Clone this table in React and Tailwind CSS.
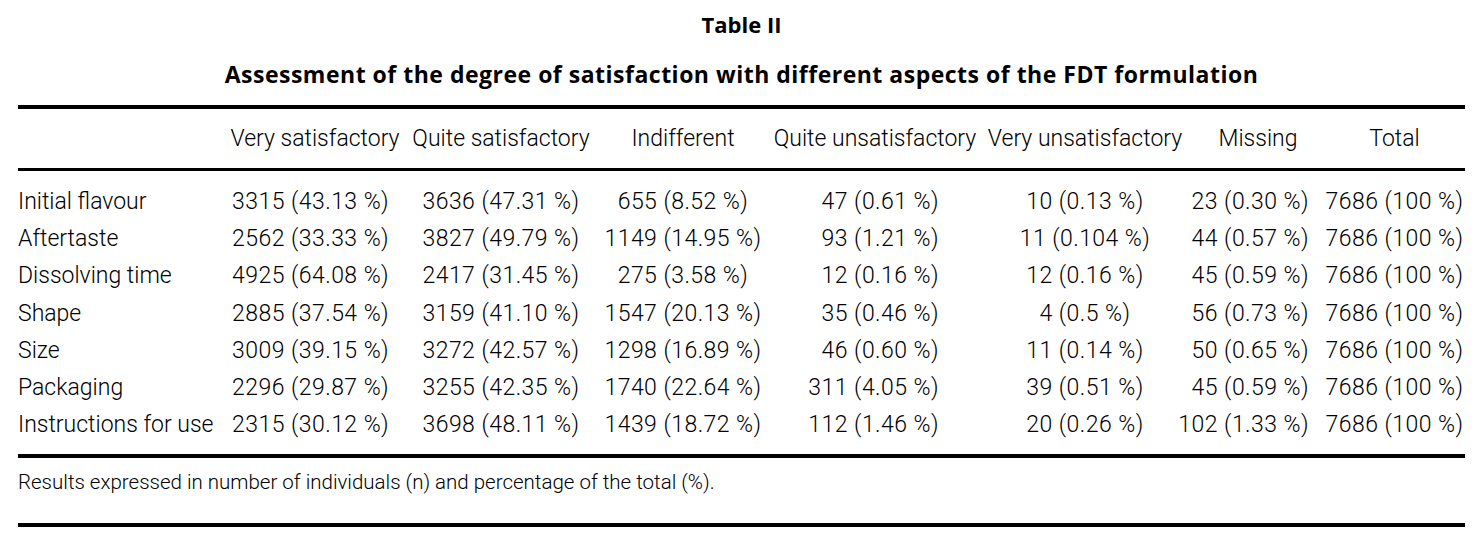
import React from "react";

const headers = [
  "Very satisfactory",
  "Quite satisfactory",
  "Indifferent",
  "Quite unsatisfactory",
  "Very unsatisfactory",
  "Missing",
  "Total",
];

const rows = [
  ["Initial flavour", "3315 (43.13 %)", "3636 (47.31 %)", "655 (8.52 %)", "47 (0.61 %)", "10 (0.13 %)", "23 (0.30 %)", "7686 (100 %)"],
  ["Aftertaste", "2562 (33.33 %)", "3827 (49.79 %)", "1149 (14.95 %)", "93 (1.21 %)", "11 (0.104 %)", "44 (0.57 %)", "7686 (100 %)"],
  ["Dissolving time", "4925 (64.08 %)", "2417 (31.45 %)", "275 (3.58 %)", "12 (0.16 %)", "12 (0.16 %)", "45 (0.59 %)", "7686 (100 %)"],
  ["Shape", "2885 (37.54 %)", "3159 (41.10 %)", "1547 (20.13 %)", "35 (0.46 %)", "4 (0.5 %)", "56 (0.73 %)", "7686 (100 %)"],
  ["Size", "3009 (39.15 %)", "3272 (42.57 %)", "1298 (16.89 %)", "46 (0.60 %)", "11 (0.14 %)", "50 (0.65 %)", "7686 (100 %)"],
  ["Packaging", "2296 (29.87 %)", "3255 (42.35 %)", "1740 (22.64 %)", "311 (4.05 %)", "39 (0.51 %)", "45 (0.59 %)", "7686 (100 %)"],
  ["Instructions for use", "2315 (30.12 %)", "3698 (48.11 %)", "1439 (18.72 %)", "112 (1.46 %)", "20 (0.26 %)", "102 (1.33 %)", "7686 (100 %)"],
];

const grid = "grid grid-cols-[204px_186px_186px_178px_206px_214px_132px_141px]";

const dataAlign = [
  "justify-start",
  "justify-start pl-[10px] tracking-[0.02em]",
  "justify-center tracking-[0.02em]",
  "justify-center tracking-[0.02em]",
  "justify-end pr-[39px] tracking-[0.02em]",
  "justify-center tracking-[0.02em]",
  "justify-end pr-[15px] tracking-[0.02em]",
  "justify-center tracking-[0.02em]",
];

export default function App() {
  return (
    <div className="w-[1483px] h-[536px] bg-white text-black overflow-hidden">
      <div className="pt-[10px] text-center font-['Open_Sans',Arial,sans-serif] font-bold text-[22px] leading-[28px]">
        Table II
      </div>
      <div className="mt-[22px] text-center font-['Open_Sans',Arial,sans-serif] font-bold text-[23px] tracking-[0.5px] leading-[28px]">
        Assessment of the degree of satisfaction with different aspects of the FDT formulation
      </div>
      <div className="mx-[18px] mt-[17px] font-['Roboto',sans-serif] font-light text-[23px] leading-[36px]">
        <div className="h-[4px] bg-black" />
        <div className={`${grid} h-[59px] items-center pt-[1px]`}>
          <div />
          {headers.map((h) => (
            <div key={h} className="flex justify-center whitespace-nowrap">
              {h}
            </div>
          ))}
        </div>
        <div className="h-[3px] bg-black" />
        <div className="pt-[12px] pb-[11px]">
          {rows.map((r) => (
            <div key={r[0]} className={`${grid} h-[37.2px] leading-[37.2px]`}>
              {r.map((c, i) => (
                <div key={i} className={`flex whitespace-nowrap ${dataAlign[i]}`}>
                  {c}
                </div>
              ))}
            </div>
          ))}
        </div>
        <div className="h-[4px] bg-black" />
        <div className="pt-[12px] pb-[29px] text-[20.5px] leading-[24px]">
          Results expressed in number of individuals (n) and percentage of the total (%).
        </div>
        <div className="h-[4px] bg-black" />
      </div>
    </div>
  );
}
